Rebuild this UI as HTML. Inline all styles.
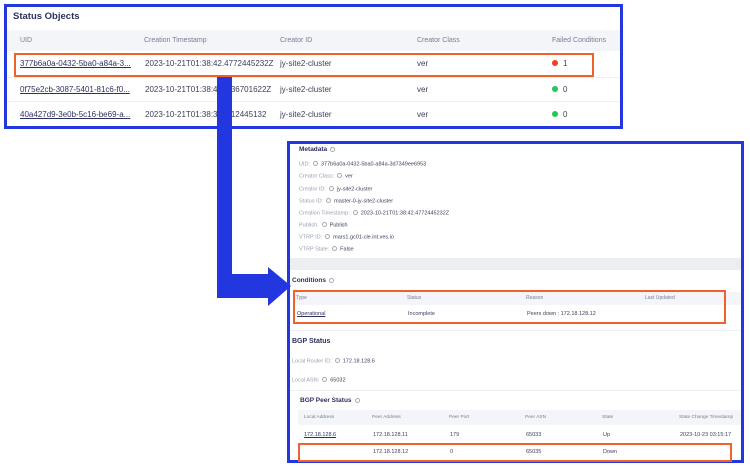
<!DOCTYPE html>
<html><head><style>
*{margin:0;padding:0;box-sizing:border-box}
body{width:750px;height:467px;background:#fff;position:relative;overflow:hidden;font-family:"Liberation Sans",sans-serif;color:#3a3f5c}
.a{position:absolute;white-space:nowrap}
.h{color:#777d93}
.lk{text-decoration:underline;color:#2c3160}
.dot{display:inline-block;width:6px;height:6px;border-radius:50%;margin-right:5px;vertical-align:0}
.s{font-size:5.5px}
.lb{color:#9a9fb0}
.i{display:inline-block;width:5px;height:5px;border:0.6px solid #aaa;border-radius:50%;margin:0 3px;vertical-align:-0.5px}
</style></head><body>
<!-- top panel -->
<div class="a" style="left:4px;top:4px;width:619px;height:125px;border:3px solid #2237e0"></div>
<div class="a" style="left:13px;top:11px;font-size:9.5px;font-weight:bold;color:#2c3160">Status Objects</div>
<div class="a" style="left:7px;top:30px;width:613px;height:21px;background:#f4f5f8"></div>
<div class="a h" style="left:20px;top:37px;font-size:7px">UID</div>
<div class="a h" style="left:144px;top:37px;font-size:7px">Creation Timestamp</div>
<div class="a h" style="left:280px;top:37px;font-size:7px">Creator ID</div>
<div class="a h" style="left:417px;top:37px;font-size:7px">Creator Class</div>
<div class="a h" style="left:552px;top:37px;font-size:7px">Failed Conditions</div>
<div class="a" style="left:7px;top:101px;width:613px;height:1px;background:#eef0f3"></div>
<div class="a" style="left:7px;top:77px;width:613px;height:1px;background:#eef0f3"></div>
<div class="a" style="left:20px;top:59px;font-size:8px"><span class="lk">377b6a0a-0432-5ba0-a84a-3...</span></div>
<div class="a" style="left:145px;top:59px;font-size:8px">2023-10-21T01:38:42.4772445232Z</div>
<div class="a" style="left:280px;top:59px;font-size:8px">jy-site2-cluster</div>
<div class="a" style="left:417px;top:59px;font-size:8px">ver</div>
<div class="a" style="left:552px;top:59px;font-size:8px"><span class="dot" style="background:#f2401c"></span>1</div>
<div class="a" style="left:20px;top:85px;font-size:8px"><span class="lk">0f75e2cb-3087-5401-81c6-f0...</span></div>
<div class="a" style="left:145px;top:85px;font-size:8px">2023-10-21T01:38:4&nbsp;&nbsp;&nbsp;&nbsp;&nbsp;&nbsp;36701622Z</div>
<div class="a" style="left:280px;top:85px;font-size:8px">jy-site2-cluster</div>
<div class="a" style="left:417px;top:85px;font-size:8px">ver</div>
<div class="a" style="left:552px;top:85px;font-size:8px"><span class="dot" style="background:#22c55e"></span>0</div>
<div class="a" style="left:20px;top:110px;font-size:8px"><span class="lk">40a427d9-3e0b-5c16-be69-a...</span></div>
<div class="a" style="left:145px;top:110px;font-size:8px">2023-10-21T01:38:3&nbsp;&nbsp;&nbsp;&nbsp;&nbsp;&nbsp;12445132</div>
<div class="a" style="left:280px;top:110px;font-size:8px">jy-site2-cluster</div>
<div class="a" style="left:417px;top:110px;font-size:8px">ver</div>
<div class="a" style="left:552px;top:110px;font-size:8px"><span class="dot" style="background:#22c55e"></span>0</div>
<div class="a" style="left:14px;top:53px;width:580px;height:24px;border:2px solid #f4602a"></div>

<!-- bottom panel -->
<div class="a" style="left:287px;top:141px;width:457px;height:322px;border:3px solid #2237e0"></div>
<div class="a" style="left:290px;top:258px;width:451px;height:12px;background:#eceef2"></div>
<div class="a" style="left:299px;top:146px;font-size:6.5px;font-weight:bold;color:#2c3160">Metadata<span class="i"></span></div>
<div class="a s" style="left:299px;top:161px"><span class="lb">UID:</span><span class="i"></span>377b6a0a-0432-5ba0-a84a-3d7349ee6953</div>
<div class="a s" style="left:299px;top:173px"><span class="lb">Creator Class:</span><span class="i"></span>ver</div>
<div class="a s" style="left:299px;top:186px"><span class="lb">Creator ID:</span><span class="i"></span>jy-site2-cluster</div>
<div class="a s" style="left:299px;top:198px"><span class="lb">Status ID:</span><span class="i"></span>master-0-jy-site2-cluster</div>
<div class="a s" style="left:299px;top:210px"><span class="lb">Creation Timestamp:</span><span class="i"></span>2023-10-21T01:38:42.4772445232Z</div>
<div class="a s" style="left:299px;top:222px"><span class="lb">Publish:</span><span class="i"></span>Publish</div>
<div class="a s" style="left:299px;top:234px"><span class="lb">VTRP ID:</span><span class="i"></span>mars1.gc01-cle.int.ves.io</div>
<div class="a s" style="left:299px;top:246px"><span class="lb">VTRP Stale:</span><span class="i"></span>False</div>
<div class="a" style="left:292px;top:277px;font-size:6.5px;font-weight:bold;color:#2c3160">Conditions<span class="i"></span></div>
<div class="a" style="left:295px;top:292px;width:446px;height:13px;background:#f4f5f8"></div>
<div class="a s h" style="left:296px;top:295px;font-size:5px">Type</div>
<div class="a s h" style="left:407px;top:295px;font-size:5px">Status</div>
<div class="a s h" style="left:526px;top:295px;font-size:5px">Reason</div>
<div class="a s h" style="left:645px;top:295px;font-size:5px">Last Updated</div>
<div class="a s" style="left:297px;top:311px"><span class="lk">Operational</span></div>
<div class="a s" style="left:408px;top:311px">Incomplete</div>
<div class="a s" style="left:527px;top:311px">Peers down : 172.18.128.12</div>
<div class="a" style="left:293px;top:290px;width:433px;height:34px;border:2px solid #f4602a"></div>
<div class="a" style="left:290px;top:330px;width:451px;height:1px;background:#eef0f3"></div>
<div class="a" style="left:292px;top:338px;font-size:7px;font-weight:bold;color:#2c3160">BGP Status</div>
<div class="a s" style="left:292px;top:358px"><span class="lb">Local Router ID:</span><span class="i"></span>172.18.128.6</div>
<div class="a s" style="left:292px;top:377px"><span class="lb">Local ASN:</span><span class="i"></span>65032</div>
<div class="a" style="left:290px;top:390px;width:451px;height:1px;background:#eef0f3"></div>
<div class="a" style="left:300px;top:397px;font-size:6.5px;font-weight:bold;color:#2c3160">BGP Peer Status<span class="i"></span></div>
<div class="a" style="left:298px;top:410px;width:443px;height:15px;background:#f4f5f8"></div>
<div class="a h" style="left:304px;top:415px;font-size:4.8px">Local Address</div>
<div class="a h" style="left:372px;top:415px;font-size:4.8px">Peer Address</div>
<div class="a h" style="left:449px;top:415px;font-size:4.8px">Peer Port</div>
<div class="a h" style="left:525px;top:415px;font-size:4.8px">Peer ASN</div>
<div class="a h" style="left:602px;top:415px;font-size:4.8px">State</div>
<div class="a h" style="left:679px;top:415px;font-size:4.8px">State Change Timestamp</div>
<div class="a s" style="left:304px;top:432px"><span class="lk">172.18.128.6</span></div>
<div class="a s" style="left:373px;top:432px">172.18.128.11</div>
<div class="a s" style="left:450px;top:432px">179</div>
<div class="a s" style="left:526px;top:432px">65033</div>
<div class="a s" style="left:603px;top:432px">Up</div>
<div class="a s" style="left:680px;top:432px">2023-10-23 03:15:17</div>
<div class="a s" style="left:373px;top:449px">172.18.128.12</div>
<div class="a s" style="left:450px;top:449px">0</div>
<div class="a s" style="left:526px;top:449px">65035</div>
<div class="a s" style="left:603px;top:449px">Down</div>
<div class="a" style="left:298px;top:443px;width:434px;height:19px;border:2px solid #f4602a"></div>

<!-- arrow -->
<svg class="a" style="left:0;top:0" width="750" height="467"><path d="M217 77H232V274H268V267L291 286L268 306V298H217Z" fill="#2237e0"/></svg>
</body></html>
